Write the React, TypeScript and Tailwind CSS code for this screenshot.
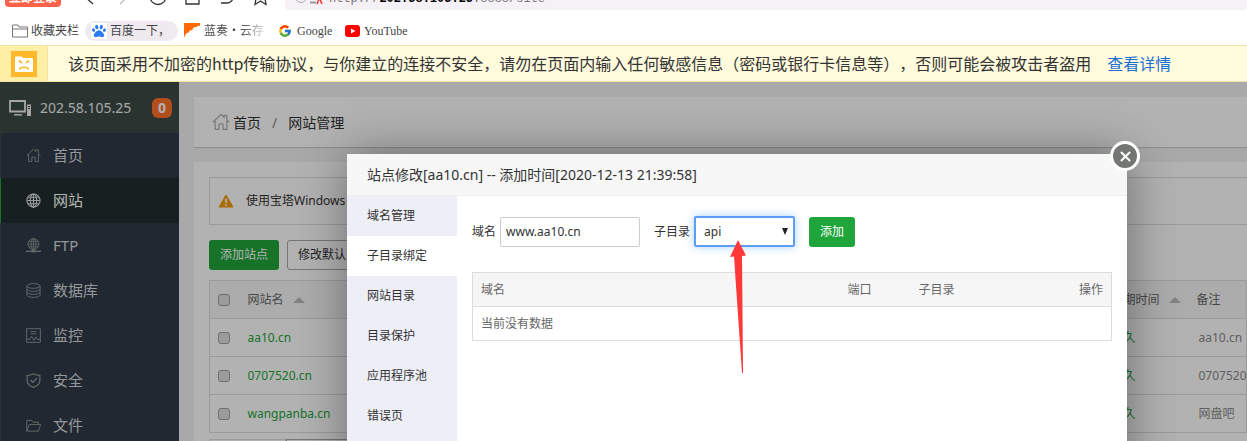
import React, { useState } from "react";
import { FcGoogle } from "react-icons/fc";
import { FaPaw } from "react-icons/fa";

interface NavItem {
  label: string;
  icon: React.ReactNode;
  active?: boolean;
}

const line = {
  viewBox: "0 0 16 16",
  fill: "none",
  stroke: "currentColor",
  className: "size-[15px] shrink-0",
};

const HomeIcon = ({ className = "size-[15px] shrink-0" }: { className?: string }) => (
  <svg viewBox="0 0 16 16" fill="none" stroke="currentColor" className={className}>
    <path d="M.7 8.3 8 1.2l2.8 2.7V2h2.4v4.2l2.2 2.1M2.8 6.8v7.7h3.4V9.8h3.6v4.7h3.4V6.8" />
  </svg>
);

const GlobeIcon = () => (
  <svg {...line} strokeWidth="1.2">
    <circle cx="8" cy="8" r="7" />
    <ellipse cx="8" cy="8" rx="3.4" ry="7" />
    <path d="M8 1v14M1.200 8h13.600M2.200 4.500h11.600M2.200 11.500h11.600" />
  </svg>
);

const FtpIcon = () => (
  <svg {...line} strokeWidth="0.9">
    <circle cx="8" cy="6.5" r="5.9" />
    <ellipse cx="8" cy="6.5" rx="2.7" ry="5.9" />
    <path d="M8 .8v11.4M2.3 6.5h11.4M3.2 3.6h9.6M3.2 9.4h9.6" />
    <path d="M0 14.2h16" strokeWidth="1.4" />
    <path d="M6 14.2h4" strokeWidth="2.6" />
  </svg>
);

const DatabaseIcon = () => (
  <svg {...line}>
    <ellipse cx="8" cy="3.2" rx="7" ry="2.5" />
    <path d="M1 3.2v9.6c0 1.4 3 2.5 7 2.5s7-1.1 7-2.5V3.2M1 6.4c0 1.4 3 2.5 7 2.5s7-1.1 7-2.5M1 9.6c0 1.4 3 2.5 7 2.5s7-1.1 7-2.5" />
  </svg>
);

const MonitorIcon = () => (
  <svg {...line}>
    <path d="M.7.7h14.6v14.6H.7zM5 3.800h6M5 6.200h6M1 12h3l2-3.200 2.400 4.400L10.500 9.500l1.500 2.500h3" />
  </svg>
);

const ShieldIcon = () => (
  <svg {...line} strokeWidth="1.3">
    <path d="M8 .7c2 1.300 4.200 1.800 6.800 1.800V8c0 3.300-3 6-6.800 7.400C4.200 14 1.200 11.300 1.200 8V2.500C3.800 2.500 6 2 8 .7zM4.800 7.500l2.600 2.600 4.400-4.600" />
  </svg>
);

const FilesIcon = () => (
  <svg {...line}>
    <path d="M.8 14V2.500h5l1.500 2h6V7M.8 14 3.600 7h12L13.300 14z" />
  </svg>
);

const navItems: NavItem[] = [
  { label: "首页", icon: <HomeIcon /> },
  { label: "网站", icon: <GlobeIcon />, active: true },
  { label: "FTP", icon: <FtpIcon /> },
  { label: "数据库", icon: <DatabaseIcon /> },
  { label: "监控", icon: <MonitorIcon /> },
  { label: "安全", icon: <ShieldIcon /> },
  { label: "文件", icon: <FilesIcon /> },
];

const sites = [
  { name: "aa10.cn", note: "aa10.cn" },
  { name: "0707520.cn", note: "0707520.cn" },
  { name: "wangpanba.cn", note: "网盘吧" },
];

const tabs = ["域名管理", "子目录绑定", "网站目录", "目录保护", "应用程序池", "错误页"];

const BrowserBar = () => (
  <div className="flex h-[10px] shrink-0 items-end overflow-hidden bg-white">
    <div className="shrink-0 pb-[3px] pl-[5px]">
      <button className="block h-6 w-14 rounded-sm bg-[#ff6248] pt-[6px] text-[12px] leading-[18px] font-bold text-white">
        立即登录
      </button>
    </div>
    <svg className="ml-[19px] h-[10px] w-[200px] shrink-0" viewBox="80 0 200 10" fill="none" stroke="#333" strokeWidth="1.3">
      <path d="M84-4l9 8" />
      <path d="M128-4l-8 8" stroke="#bbb" />
      <circle cx="158" cy="-3.500" r="8" />
      <path d="M186-8v12h13V-8" />
      <path d="M221 3h6a6 6 0 0 0 6-6" />
      <path d="M255 4.500l1-6-4-5h17l-4 5 1 6-5.500-3.500z" />
    </svg>
    <div className="ml-[5px] flex h-8 flex-1 items-end rounded-sm bg-[#f6f1f6] pb-[3px] pl-[10px]">
      <svg viewBox="0 0 30 16" className="mr-1 h-4 w-[30px]" fill="none">
        <circle cx="6" cy="6" r="5.500" stroke="#aaa" />
        <path d="M15 11.500h6" stroke="#999" strokeWidth="2" />
        <path d="M22 13l2.500-6 2.500 6" stroke="#e33" strokeWidth="1.500" />
      </svg>
      <span className="font-['Liberation_Mono',monospace] text-[12px] leading-4 text-[#777]">
        http://<b className="text-black">202.58.105.25</b>:8888/site
      </span>
    </div>
  </div>
);

const Bookmarks = () => (
  <nav className="flex h-[35px] shrink-0 items-center bg-white pt-[7px] pl-3 font-['Liberation_Serif','Noto_Sans_CJK_SC',serif] text-[12px] whitespace-nowrap text-[#444]">
    <a href="#" className="flex w-[73px] items-center gap-[3px]">
      <svg viewBox="0 0 16 14" className="w-4 shrink-0" fill="none" stroke="#777">
        <path d="M.5 13V1H6l1 2h8.500v10zM.5 5H15" />
      </svg>
      收藏夹栏
    </a>
    <a href="#" className="flex h-5 w-[93px] items-center gap-[3px] overflow-hidden rounded-full bg-[#eeeaf0] pl-[6px]">
      <span className="flex size-4 shrink-0 items-center justify-center bg-white">
        <FaPaw className="size-[14px] text-[#2a7cf0]" />
      </span>
      百度一下，
    </a>
    <a href="#" className="ml-[6px] flex w-20 items-center gap-1">
      <svg viewBox="0 0 16 16" className="size-4 shrink-0">
        <path d="M0 0h16v3c-2-.8-3 0-3.500 1.200C10 3.800 8.500 5 8.500 7 6 7 5 8 4.800 9.500 2.500 9.500 1 11.500 0 15z" fill="#ff6a00" />
      </svg>
      <span className="bg-linear-to-r from-[#444] from-60% to-[#ddd] bg-clip-text text-transparent">蓝奏・云存</span>
    </a>
    <a href="#" className="ml-[14px] flex w-[67px] items-center gap-[5px]">
      <FcGoogle className="size-[14px] shrink-0" />
      Google
    </a>
    <a href="#" className="flex items-center gap-[3px]">
      <svg viewBox="0 0 16 12" className="w-4 shrink-0">
        <rect width="15" height="12" rx="3" fill="#f00" />
        <path d="M6 3.500v5L10.500 6z" fill="#fff" />
      </svg>
      YouTube
    </a>
  </nav>
);

const InsecureBanner = () => (
  <div className="flex h-[37px] shrink-0 items-stretch border-y border-[#f3e3a3] bg-[#fffbdc] font-['Noto_Sans_CJK_SC',sans-serif] text-base whitespace-nowrap text-[#333]">
    <div className="flex w-12 items-center border-r border-[#f3e3a3] bg-[#ffefa5] pl-[11px]">
      <svg viewBox="0 0 26 26" className="size-[26px]">
        <rect width="26" height="26" fill="#ffb82e" />
        <path d="M4 6.500Q4 5.500 5 5.500h5.500l2 1.500H21q1 0 1 1v12q0 1-1 1H5q-1 0-1-1z" fill="#fff" />
        <path d="M8 9.500l3 2.500M18 9.500l-3 2.500M8.500 18.500 10 16.500h6l1.500 2" fill="none" stroke="#ffb82e" strokeWidth="1.700" />
      </svg>
    </div>
    <p className="flex items-center gap-4 pb-[2px] pl-5 [text-spacing-trim:space-all]">
      该页面采用不加密的http传输协议，与你建立的连接不安全，请勿在页面内输入任何敏感信息（密码或银行卡信息等），否则可能会被攻击者盗用
      <a href="#" className="text-[#1a6fd4]">查看详情</a>
    </p>
  </div>
);

const Sidebar = () => (
  <aside className="w-[179px] shrink-0 bg-[#313a47] text-[15px] text-[#d5d8dc]">
    <div className="flex h-[51px] items-center bg-[#3c4946] pr-[7px] pl-[9px] text-[14px] text-[#eee]">
      <svg viewBox="0 0 23 16" className="mr-2 w-[23px] shrink-0" fill="none" stroke="#eee">
        <path d="M1 1h15v10.500H1z" strokeWidth="1.800" />
        <path d="M5 14.800h8" strokeWidth="1.500" />
        <path d="M18 4.500h4V16h-4z" fill="#eee" stroke="none" />
        <path d="M19 6.500h2M19 8.500h2" stroke="#3c4946" />
      </svg>
      202.58.105.25
      <span className="ml-auto flex size-5 items-center justify-center rounded-md bg-[#ff7029] text-[14px] font-bold text-white">0</span>
    </div>
    <nav>
      {navItems.map((item) => (
        <a
          key={item.label}
          href="#"
          className={
            item.active
              ? "flex h-[45px] items-center gap-3 border-l border-[#20a53a] bg-[#222f2f] pl-[25px] text-white"
              : "flex h-[45px] items-center gap-3 border-l border-[#3c4946] pl-[25px]"
          }
        >
          <span className={item.active ? "text-[#ddd]" : "text-[#949895]"}>{item.icon}</span>
          {item.label}
        </a>
      ))}
    </nav>
  </aside>
);

const SortArrow = () => (
  <svg viewBox="0 0 12 6" className="ml-[9px] inline w-3 align-middle">
    <path d="M0 6h12L6 0z" fill="#bbb" />
  </svg>
);

const CheckBox = ({ label }: { label: string }) => (
  <input
    type="checkbox"
    aria-label={label}
    className="block size-3 appearance-none rounded-[3px] border border-[#a0a0a0] bg-[#dde0dd]"
  />
);

const SiteTable = () => (
  <table className="mt-[10px] w-full table-fixed border border-[#ddd] text-left text-[12px] text-[#888]">
    <colgroup>
      <col className="w-[30px]" />
      <col />
      <col className="w-[85px]" />
      <col className="w-[58px]" />
    </colgroup>
    <thead>
      <tr className="h-[38px] border-b border-[#ddd] bg-[#f6f6f6] whitespace-nowrap text-[#666]">
        <th className="pl-2"><CheckBox label="全选" /></th>
        <th className="pl-2 font-normal">网站名<SortArrow /></th>
        <th className="pl-2 font-normal">到期时间<SortArrow /></th>
        <th className="pl-2 font-normal">备注</th>
      </tr>
    </thead>
    <tbody>
      {sites.map((site) => (
        <tr key={site.name} className="h-[38px] border-b border-[#ddd] whitespace-nowrap">
          <td className="pl-2"><CheckBox label={site.name} /></td>
          <td className="pl-2"><a href="#" className="text-[#20a53a]">{site.name}</a></td>
          <td className="pl-2"><a href="#" className="text-[#20a53a]">永久</a></td>
          <td className="pl-[10px]">{site.note}</td>
        </tr>
      ))}
    </tbody>
  </table>
);

const Main = () => (
  <main className="flex min-w-0 flex-1 flex-col gap-[15px] bg-[#f4f2f4] pt-[15px] pl-[15px] text-[14px] text-[#333]">
    <div className="flex h-[50px] shrink-0 items-center bg-white pl-[18px] whitespace-nowrap shadow-[0_1px_1px_#ccc]">
      <HomeIcon className="mr-[3px] size-[18px] text-[#aaa]" />
      <a href="#">首页</a>
      <span className="mx-[11px] text-[#888]">/</span>
      <span>网站管理</span>
    </div>
    <div className="flex-1 bg-white pt-[15px] pl-[15px]">
      <div className="flex h-12 items-center border border-r-0 border-[#ddd] pl-2 text-[12px] whitespace-nowrap">
        <svg viewBox="0 0 16 14" className="mr-3 w-4">
          <path d="M8 1 15 13H1z" fill="#f59a0c" stroke="#f59a0c" strokeLinejoin="round" />
          <path d="M8 4.500v4.500M8 10.300v1.700" stroke="#fff" strokeWidth="1.700" />
        </svg>
        使用宝塔Windows
      </div>
      <div className="mt-[15px] flex gap-2 text-[12px] whitespace-nowrap">
        <button className="h-[30px] rounded-[3px] bg-[#20a53a] px-[11px] text-white">添加站点</button>
        <button className="h-[30px] rounded-[3px] border border-[#aaa] px-[10px]">修改默认页</button>
      </div>
      <SiteTable />
      <div className="mt-[6px] flex h-8">
        <div className="w-[77px] border border-[#ddd]" />
        <div className="w-[100px] border border-[#aaa]" />
      </div>
    </div>
  </main>
);

const SiteModal = () => {
  const [domain, setDomain] = useState<string>("www.aa10.cn");
  const [dir, setDir] = useState<string>("api");

  return (
    <div
      role="dialog"
      className="absolute top-[72px] left-[347px] flex h-[560px] w-[780px] flex-col rounded-xs bg-white text-[12px] text-[#333] shadow-[1px_1px_50px_rgba(0,0,0,0.4)]"
    >
      <h2 className="flex h-[42px] shrink-0 items-center border-b border-[#eee] bg-[#f7f7f7] pl-5 text-[14px]">
        站点修改[aa10.cn] -- 添加时间[2020-12-13 21:39:58]
      </h2>
      <button
        aria-label="关闭"
        className="absolute -top-[13px] -right-[13px] flex size-[30px] items-center justify-center rounded-full border-[3px] border-white bg-[#747674]"
      >
        <svg viewBox="0 0 12 12" className="size-[11px]" stroke="#fff" strokeWidth="2.200">
          <path d="M1 1l10 10M11 1L1 11" />
        </svg>
      </button>
      <div className="flex flex-1">
        <nav className="w-[110px] shrink-0 bg-[#eeeef7]">
          {tabs.map((tab) => (
            <button
              key={tab}
              className={
                tab === "子目录绑定"
                  ? "block h-10 w-full bg-white pl-5 text-left"
                  : "block h-10 w-full pl-5 text-left"
              }
            >
              {tab}
            </button>
          ))}
        </nav>
        <div className="flex-1 px-[15px] pt-[20px]">
          <form className="flex items-center" onSubmit={(e) => e.preventDefault()}>
            <label htmlFor="domain" className="mr-1">域名</label>
            <input
              id="domain"
              value={domain}
              onChange={(e) => setDomain(e.target.value)}
              className="mr-[14px] h-[30px] w-[140px] rounded-xs border border-[#ccc] px-[5px]"
            />
            <label htmlFor="dir" className="mr-1">子目录</label>
            <span className="relative mr-[14px]">
              <select
                id="dir"
                value={dir}
                onChange={(e) => setDir(e.target.value)}
                className="block h-[31px] w-[101px] appearance-none rounded-xs border-2 border-[#5b9df8] bg-white pl-2 shadow-[0_0_8px_rgba(82,168,236,0.5)]"
              >
                <option value="api">api</option>
              </select>
              <svg viewBox="0 0 6 7" className="pointer-events-none absolute top-[12px] right-[7px] h-[7px] w-[6px]">
                <path d="M0 0h6L3 7z" fill="#222" />
              </svg>
            </span>
            <button className="h-[30px] w-[46px] rounded-[3px] bg-[#20a53a] text-white">添加</button>
          </form>
          <table className="mt-[25px] w-full table-fixed border border-[#ddd] text-left text-[#666]">
            <colgroup>
              <col />
              <col className="w-[71px]" />
              <col className="w-[130px]" />
              <col className="w-[71px]" />
            </colgroup>
            <thead>
              <tr className="h-[34px] border-b border-[#ddd] bg-[#f6f6f6]">
                <th className="px-2 font-normal">域名</th>
                <th className="px-2 font-normal">端口</th>
                <th className="px-2 font-normal">子目录</th>
                <th className="px-2 text-right font-normal">操作</th>
              </tr>
            </thead>
            <tbody>
              <tr className="h-[34px]">
                <td colSpan={4} className="px-2">当前没有数据</td>
              </tr>
            </tbody>
          </table>
        </div>
      </div>
    </div>
  );
};

const App: React.FC = () => (
  <div className="flex h-screen flex-col overflow-hidden font-['Noto_Sans','Noto_Sans_CJK_SC',sans-serif]">
    <BrowserBar />
    <Bookmarks />
    <InsecureBanner />
    <div className="relative flex min-h-0 flex-1 overflow-hidden">
      <Sidebar />
      <Main />
      <div className="absolute inset-0 bg-black/30" />
      <SiteModal />
      <svg viewBox="0 0 18 134" className="pointer-events-none absolute top-[158px] left-[729px] w-[18px]">
        <path d="M9 0l8 15.500-4 .5L14 133h-1L5 16.500l-4 .5z" fill="#ff3838" />
      </svg>
    </div>
  </div>
);

export default App;
